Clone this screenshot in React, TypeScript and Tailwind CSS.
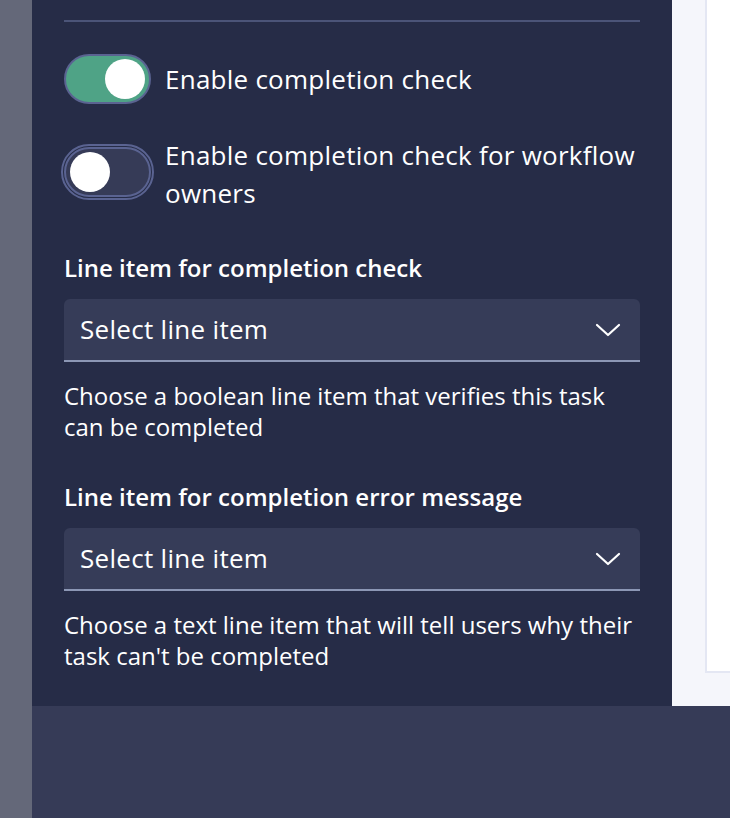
function Toggle({ on, focused }: { on: boolean; focused?: boolean }) {
  return (
    <div
      className={
        "shrink-0 w-[87px] h-[50px] rounded-full border-2 border-[#5a6391] flex items-center px-[4px] " +
        (on ? "bg-[#4fa386] justify-end" : "bg-[#363b57] justify-start") +
        (focused ? " outline-2 outline-offset-1 outline-[#5a6391]" : "")
      }
    >
      <div className="w-10 h-10 rounded-full bg-white" />
    </div>
  );
}

function Chevron() {
  return (
    <svg width="26" height="16" viewBox="0 0 26 16" fill="none" className="shrink-0">
      <polyline points="2,3 13,13 24,3" stroke="white" strokeWidth="2.2" strokeLinecap="round" strokeLinejoin="round" />
    </svg>
  );
}

function LineSelect({ label, help, top }: { label: string; help: string; top: string }) {
  return (
    <div className={top}>
      <div className="text-[24px] font-semibold leading-[30px] text-white">{label}</div>
      <div className="mt-[16px] h-[63px] bg-[#363c58] rounded-t-[6px] border-b-2 border-[#8c97b5] flex items-center justify-between pl-[16px] pr-[19px]">
        <span className="text-[26px] text-white tracking-[0.3px]">Select line item</span>
        <Chevron />
      </div>
      <p className="mt-[18px] text-[24px] leading-[31px] text-white">{help}</p>
    </div>
  );
}

export default function App() {
  return (
    <div className="w-[730px] h-[818px] flex overflow-hidden" style={{ fontFamily: "'Open Sans', Lato, sans-serif" }}>
      <div className="w-[32px] shrink-0 bg-[#646879]" />
      <div className="flex-1 flex flex-col">
        <div className="h-[706px] flex">
          <div className="w-[640px] shrink-0 bg-[#262c47] px-[32px]">
            <div className="mt-[20px] h-[2px] bg-[#4b5478]" />
            <div className="mt-[32px] flex items-center gap-[14px]">
              <Toggle on />
              <span className="text-[26px] text-white tracking-[0.25px]">Enable completion check</span>
            </div>
            <div className="mt-[41px] flex items-start gap-[14px]">
              <div className="pt-[2px]">
                <Toggle on={false} focused />
              </div>
              <span className="text-[26px] leading-[38px] text-white -mt-[9px] tracking-[0.25px]">
                Enable completion check for workflow owners
              </span>
            </div>
            <LineSelect
              top="mt-[41px]"
              label="Line item for completion check"
              help="Choose a boolean line item that verifies this task can be completed"
            />
            <LineSelect
              top="mt-[40px]"
              label="Line item for completion error message"
              help="Choose a text line item that will tell users why their task can't be completed"
            />
          </div>
          <div className="flex-1 bg-[#f5f6fb] pl-[33px] pb-[33px]">
            <div className="h-full bg-white border-l-2 border-b-2 border-[#e4e7f3]" />
          </div>
        </div>
        <div className="flex-1 bg-[#363b57]" />
      </div>
    </div>
  );
}
